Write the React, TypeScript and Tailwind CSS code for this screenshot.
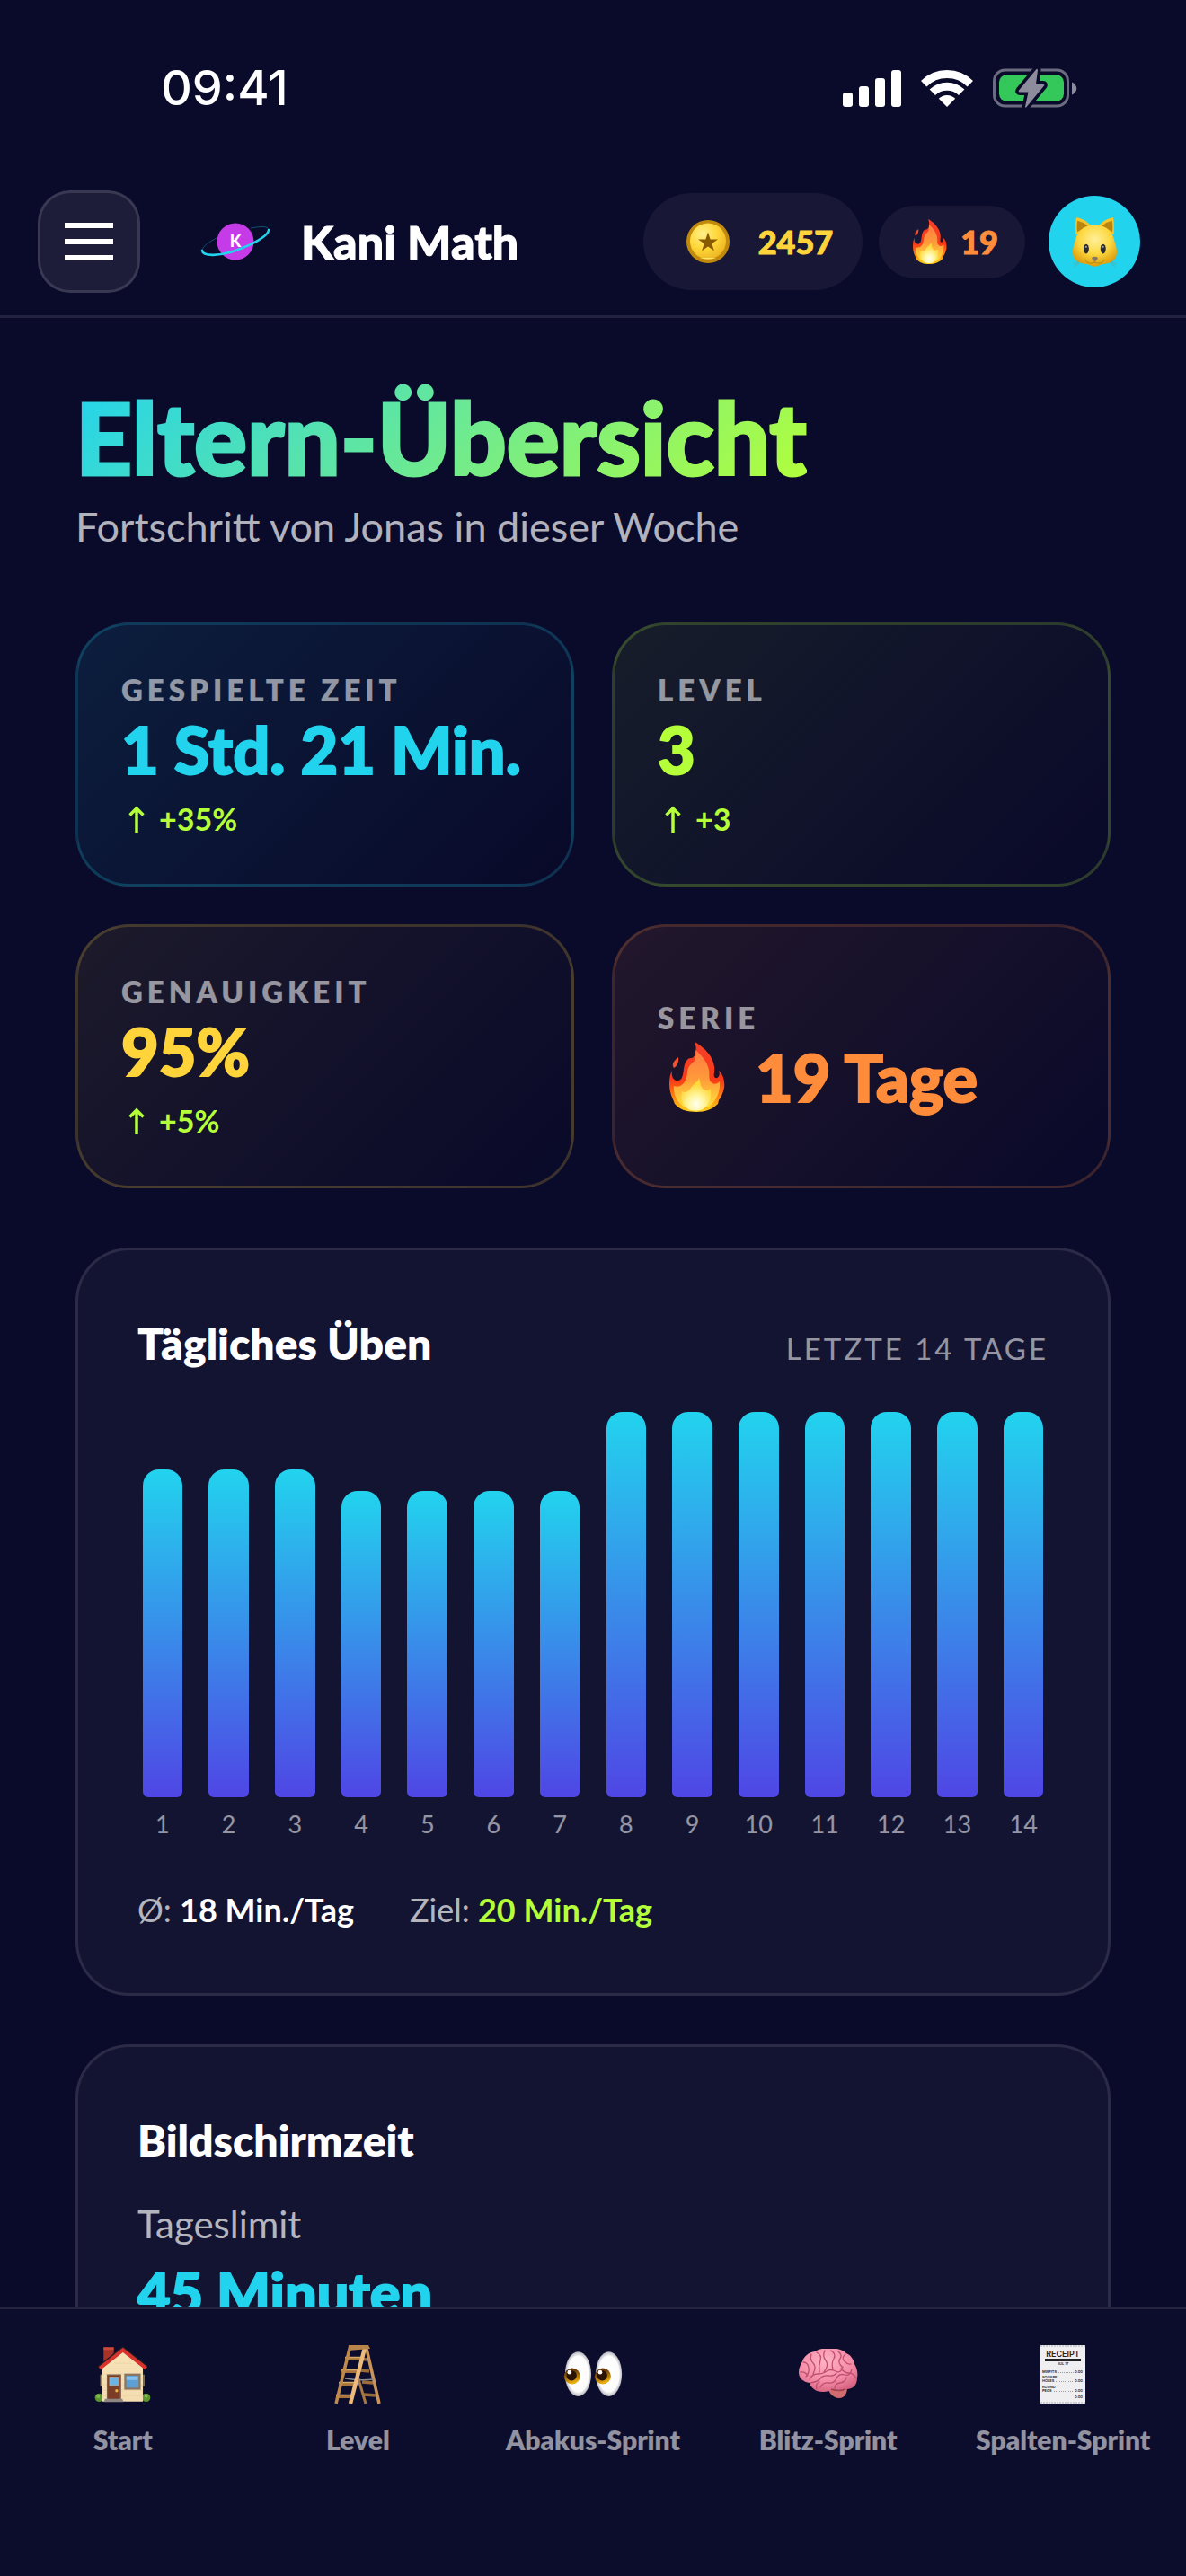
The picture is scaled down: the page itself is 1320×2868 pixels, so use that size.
import { ReactNode } from "react";
import clsx from "clsx";

const stats = [
  {
    label: "Gespielte Zeit",
    value: "1 Std. 21 Min.",
    delta: "+35%",
    card: "border-[#22d3ee]/20 from-[#22d3ee]/10",
    text: "text-[#22d3ee]",
  },
  {
    label: "Level",
    value: "3",
    delta: "+3",
    card: "border-[#b4ff39]/20 from-[#b4ff39]/8",
    text: "text-[#b4ff39]",
  },
  {
    label: "Genauigkeit",
    value: "95%",
    delta: "+5%",
    card: "border-[#ffd43b]/20 from-[#ffd43b]/8",
    text: "text-[#ffd43b]",
  },
  {
    label: "Serie",
    value: "19 Tage",
    flame: true,
    card: "border-[#ff8c3b]/20 from-[#ff8c3b]/10",
    text: "text-[#ff8c3b]",
  },
];

// percent of the chart height, one entry per day
const days = [85, 85, 85, 79.5, 79.5, 79.5, 79.5, 100, 100, 100, 100, 100, 100, 100];

const navItems = [
  { label: "Start", href: "#start", icon: <HouseIcon /> },
  { label: "Level", href: "#level", icon: <LadderIcon /> },
  { label: "Abakus-Sprint", href: "#abakus", icon: <EyesIcon /> },
  { label: "Blitz-Sprint", href: "#blitz", icon: <BrainIcon /> },
  { label: "Spalten-Sprint", href: "#spalten", icon: <ReceiptIcon /> },
];

export default function App() {
  return (
    <div className="flex h-screen w-full flex-col overflow-hidden bg-[#0a0a2a] font-[Lato,sans-serif] text-white">
      <StatusBar />
      <Header />
      <main className="min-h-0 flex-1 overflow-y-auto px-[84px] pt-[72px] [scrollbar-width:none]">
        <h1 className="w-fit bg-linear-135/srgb from-[#22d3ee] to-[#b4ff39] bg-clip-text text-[110px] leading-[120px] font-black text-transparent [-webkit-text-stroke:3px_transparent]">
          Eltern-Übersicht
        </h1>
        <p className="mt-[6px] text-[45px] leading-[68px] text-white/70">Fortschritt von Jonas in dieser Woche</p>

        <section className="mt-[73px] grid grid-cols-2 gap-[42px]">
          {stats.map((s) => (
            <div
              key={s.label}
              className={clsx(
                "flex min-h-[294px] flex-col justify-center rounded-[60px] border-3 bg-linear-135/srgb to-transparent px-[48px] py-[42px]",
                s.card
              )}
            >
              <span className="text-[33px] leading-[46px] font-extrabold tracking-[5px] text-white/55 uppercase">
                {s.label}
              </span>
              <div
                className={clsx(
                  "flex items-center text-[72px] leading-[86px] font-black whitespace-nowrap [-webkit-text-stroke:2px_currentColor]",
                  s.text
                )}
              >
                {s.flame && <FlameIcon className="mr-[34px] ml-[13px] h-[78px] w-[62px]" />}
                {s.value}
              </div>
              {s.delta && (
                <div className="mt-[11px] flex items-center gap-[10px] text-[34px] leading-[48px] font-bold text-[#b4ff39]">
                  <ArrowUpIcon />
                  {s.delta}
                </div>
              )}
            </div>
          ))}
        </section>

        <Card className="mt-[66px]">
          <div className="flex items-baseline justify-between">
            <h2 className="text-[48px] leading-[76px] font-extrabold">Tägliches Üben</h2>
            <span className="text-[33px] tracking-[3px] text-white/55 uppercase">Letzte 14 Tage</span>
          </div>
          <ol className="mt-[38px] flex gap-[18px]">
            {days.map((pct, i) => (
              <li key={i} className="flex flex-1 flex-col items-center">
                <div className="flex h-[429px] w-4/5 items-end">
                  <div
                    className="w-full rounded-t-[18px] rounded-b-[6px] bg-linear-to-b/srgb from-[#22d3ee] to-[#4f46e5]"
                    style={{ height: `${pct}%` }}
                  />
                </div>
                <span className="mt-[12px] text-[27px] leading-[36px] text-white/55">{i + 1}</span>
              </li>
            ))}
          </ol>
          <div className="mt-[50px] flex gap-[62px] text-[36px] leading-[54px] text-white/70">
            <span>
              Ø: <b className="text-white">18 Min./Tag</b>
            </span>
            <span>
              Ziel: <b className="text-[#b4ff39]">20 Min./Tag</b>
            </span>
          </div>
        </Card>

        <Card className="mt-[54px]">
          <h2 className="text-[48px] leading-[76px] font-extrabold">Bildschirmzeit</h2>
          <p className="mt-[25px] text-[42px] leading-[60px] text-white/70">Tageslimit</p>
          <p className="mt-[6px] text-[63px] leading-[80px] font-black text-[#22d3ee] [-webkit-text-stroke:2px_currentColor]">
            45 Minuten
          </p>
        </Card>
      </main>
      <BottomNav />
    </div>
  );
}

function Card({ className, children }: { className?: string; children: ReactNode }) {
  return (
    <section className={clsx("rounded-[60px] border-3 border-white/10 bg-white/4 p-[66px]", className)}>
      {children}
    </section>
  );
}

function StatusBar() {
  return (
    <div className="flex h-[187px] shrink-0 items-center justify-between pt-2 pr-[121px] pl-[179px]">
      <span className="font-[Inter,sans-serif] text-[54px] font-medium">09:41</span>
      <div className="flex items-center gap-[22px]">
        <svg viewBox="0 0 65 42" className="h-[42px] w-[65px]" fill="#fff">
          <rect x="0" y="26" width="11" height="16" rx="3" />
          <rect x="18" y="19" width="11" height="23" rx="3" />
          <rect x="36" y="10" width="11" height="32" rx="3" />
          <rect x="54" y="1" width="11" height="41" rx="3" />
        </svg>
        <svg viewBox="0 0 58 42" className="h-[42px] w-[58px]" fill="none" stroke="#fff">
          <path d="M3.2 16.2a36.5 36.5 0 0 1 51.6 0" strokeWidth="9" />
          <path d="M12.8 25.8a23 23 0 0 1 32.4 0" strokeWidth="9" />
          <path d="M29 42l-9.2-9.2a13 13 0 0 1 18.4 0z" fill="#fff" stroke="none" />
        </svg>
        <svg viewBox="0 0 94 44" className="h-[44px] w-[94px]">
          <rect x="1.5" y="2" width="82" height="40" rx="12" fill="none" stroke="#6c6c80" strokeWidth="3" />
          <rect x="7" y="7.500" width="72" height="29" rx="8" fill="#34c759" />
          <path d="M88 15.500c7 3 7 11 0 14z" fill="#8c8c9c" />
          <path
            d="M48.500 1L29 24.500q-1 2 1 2h9.500L36 43q.5 1.500 1.500 0L57 19.500q1-2-1-2h-8L50 2q-.5-2-1.500-1z"
            fill="#8c8c9c"
            stroke="#0a0a2a"
            strokeWidth="7"
            paintOrder="stroke"
          />
        </svg>
      </div>
    </div>
  );
}

function Header() {
  return (
    <header className="flex shrink-0 items-center border-b-3 border-white/10 py-[25px] pr-[51px] pl-[42px]">
      <button
        aria-label="Menü"
        className="flex size-[114px] flex-col items-center justify-center gap-[12px] rounded-[36px] border-3 border-white/12 bg-white/8"
      >
        <span className="h-[6px] w-[54px] bg-white" />
        <span className="h-[6px] w-[54px] bg-white" />
        <span className="h-[6px] w-[54px] bg-white" />
      </button>
      <svg viewBox="0 0 78 54" className="ml-[67px] h-[54px] w-[78px]">
        <path d="M2 36Q4 30 18 23M56 12q20-4 20 2" fill="none" stroke="#14506e" strokeWidth="1" />
        <circle cx="39" cy="27" r="20.500" fill="#c53be8" />
        <text x="39" y="33" textAnchor="middle" fontSize="18" fontWeight="900" fill="#fff">
          K
        </text>
        <path
          d="M2 37c1 7 20 6 37 0s37-16 37-23"
          fill="none"
          stroke="#22d3ee"
          strokeWidth="2.600"
          strokeLinecap="round"
        />
      </svg>
      <span className="ml-[34px] text-[52px] leading-[66px] font-black [-webkit-text-stroke:1px_currentColor]">
        Kani Math
      </span>

      <div className="ml-auto flex items-center gap-[18px]">
        <div className="flex h-[108px] items-center gap-[32px] rounded-full bg-white/6 pr-[33px] pl-[48px] text-[36px] font-black text-[#ffd43b] [-webkit-text-stroke:1px_currentColor]">
          <CoinIcon />
          2457
        </div>
        <div className="flex h-[81px] items-center gap-[15px] rounded-full bg-white/6 pr-[30px] pl-[38px] text-[36px] font-black text-[#ff8c3b] [-webkit-text-stroke:1px_currentColor]">
          <FlameIcon className="h-[50px] w-[38px]" />
          19
        </div>
        <button
          aria-label="Profil"
          className="ml-2 flex size-[102px] items-center justify-center rounded-full bg-[#22d3ee]"
        >
          <CatIcon />
        </button>
      </div>
    </header>
  );
}

function BottomNav() {
  return (
    <nav className="grid h-[300px] shrink-0 grid-cols-5 items-start border-t-3 border-white/10 bg-white/1 px-[6px] pt-[36px]">
      {navItems.map((item) => (
        <a key={item.label} href={item.href} className="flex flex-col items-center gap-[17px]">
          <span className="flex h-[72px] items-center">{item.icon}</span>
          <span className="text-[30px] leading-[40px] font-extrabold whitespace-nowrap text-white/55">
            {item.label}
          </span>
        </a>
      ))}
    </nav>
  );
}

function ArrowUpIcon() {
  return (
    <svg viewBox="0 0 32 30" className="h-[30px] w-[32px]" fill="none" stroke="currentColor" strokeWidth="3.500">
      <path d="M17 30V3M9.500 10.500L17 3l7.500 7.500" />
    </svg>
  );
}

function FlameIcon({ className }: { className?: string }) {
  return (
    <svg viewBox="0 0 62 78" className={className} preserveAspectRatio="none">
      <defs>
        <linearGradient id="flame-outer" x1="0" y1="0" x2="0" y2="1">
          <stop offset="0" stopColor="#f4402a" />
          <stop offset=".55" stopColor="#f93a17" />
          <stop offset=".8" stopColor="#ff8a10" />
          <stop offset="1" stopColor="#ffd21f" />
        </linearGradient>
        <linearGradient id="flame-mid" x1="0" y1="0" x2="0" y2="1">
          <stop offset="0" stopColor="#ff7a45" />
          <stop offset=".5" stopColor="#ff9a3a" />
          <stop offset="1" stopColor="#ffe23d" />
        </linearGradient>
        <radialGradient id="flame-core" cx=".5" cy=".8" r=".6">
          <stop offset="0" stopColor="#fffff0" />
          <stop offset=".45" stopColor="#fff6a0" />
          <stop offset="1" stopColor="#ffd83a" />
        </radialGradient>
      </defs>
      <path
        d="M28 0c8 4 21 15 22 28 1 6-2 10 1 12 4 1 6-4 4-8 5 4 7 12 6 19-1 6-4 11-6 14l-1 4c-6 6-14 9-24 9S12 76 6 69l-2-5C1 58 0 52 0 46c0-6 1-10 3-14-1 6 1 10 5 11 6 1 7-5 8-13 1-7 4-13 9-12 5-2 6-11 3-18z"
        fill="url(#flame-outer)"
      />
      <path d="M10 17c1 6-2 10-5 12-3-4 0-8 5-12z" fill="#f4512f" />
      <path
        d="M29 9c7 6 13 13 15 22 1 7-1 12 4 15 3 2 6 0 8-2 1 10-3 22-13 29H17C8 67 4 57 5 49c8 3 14-4 15-15 1-9 5-9 8-13 1-3 2-7 1-12z"
        fill="url(#flame-mid)"
      />
      <path
        d="M33 40c2 6 1 10 5 13 3 2 6 1 8-1 1 9-1 19-9 23-4 2-12 2-16 0-7-5-9-12-7-20 3 2 7 1 10-4 3-5 8-6 9-11z"
        fill="url(#flame-core)"
      />
    </svg>
  );
}

function CoinIcon() {
  return (
    <svg viewBox="0 0 48 48" className="size-[48px]">
      <defs>
        <radialGradient id="coin" cx=".35" cy=".3" r=".8">
          <stop offset="0" stopColor="#fff08a" />
          <stop offset=".5" stopColor="#ffd83a" />
          <stop offset="1" stopColor="#eab020" />
        </radialGradient>
      </defs>
      <circle cx="24" cy="24" r="24" fill="#c28a0a" />
      <circle cx="24" cy="23.500" r="20" fill="url(#coin)" />
      <path d="M15 42h18q-9 3-18 0z" fill="#ffe56a" />
      <path d="M24 13.500l2.600 7.900H35l-6.700 4.900 2.600 8-6.900-4.900-6.900 4.900 2.600-8-6.700-4.900h8.400z" fill="#8a5a00" />
    </svg>
  );
}

function CatIcon() {
  return (
    <svg viewBox="120 118 160 184" className="h-[61px] w-[53px]">
      <defs>
        <radialGradient id="cat" cx=".5" cy=".35" r=".65">
          <stop offset="0" stopColor="#fff09a" />
          <stop offset=".55" stopColor="#fcd840" />
          <stop offset="1" stopColor="#dc9c0c" />
        </radialGradient>
      </defs>
      <path d="M136 186c-1-22-1-44 2-58 16 2 36 12 48 26zM264 186c1-22 1-44-2-58-16 2-36 12-48 26z" fill="#f6c52c" />
      <path d="M141 176c-2-16-1-28 1-38 12 3 24 8 34 18zM259 176c2-16 1-28-1-38-12 3-24 8-34 18z" fill="#b98410" />
      <path
        d="M200 153c34 0 58 18 64 46 3 14 10 26 10 46 0 24-18 36-40 38-14 1-22 9-34 9s-20-8-34-9c-22-2-40-14-40-38 0-20 7-32 10-46 6-28 30-46 64-46z"
        fill="url(#cat)"
      />
      <ellipse cx="171" cy="233" rx="9" ry="16" fill="#2c2c30" />
      <ellipse cx="228" cy="233" rx="9" ry="16" fill="#2c2c30" />
      <circle cx="171" cy="226" r="3.500" fill="#9a9aa0" />
      <circle cx="228" cy="226" r="3.500" fill="#9a9aa0" />
      <path d="M190 262q10-6 20 0 0 8-10 13-10-5-10-13z" fill="#8a7560" />
      <path
        d="M200 275v5M168 268q4 14 20 13 8 0 12-4 4 4 12 4 16 1 20-13"
        fill="none"
        stroke="#b8860f"
        strokeWidth="3"
      />
      <path
        d="M146 276l-18 8M148 280l-16 12M254 276l18 8M252 280l16 12"
        stroke="#8a8a60"
        strokeWidth="1.500"
      />
    </svg>
  );
}

function HouseIcon() {
  return (
    <svg viewBox="44 64 190 190" className="size-[63px]">
      <defs>
        <linearGradient id="house-wall" x1="0" y1="0" x2="0" y2="1">
          <stop offset="0" stopColor="#f7e3b8" />
          <stop offset="1" stopColor="#f3dcb0" />
        </linearGradient>
      </defs>
      <circle cx="60" cy="237" r="14" fill="#5c9430" />
      <circle cx="218" cy="237" r="14" fill="#5c9430" />
      <circle cx="57" cy="233" r="6" fill="#82b850" />
      <circle cx="218" cy="232" r="6" fill="#82b850" />
      <rect x="75" y="68" width="34" height="50" fill="#a83228" />
      <rect x="75" y="68" width="34" height="9" fill="#c8483a" />
      <path d="M140 80l67 56v114H70V136z" fill="url(#house-wall)" />
      <path d="M70 158h137M70 176h137M70 194h137M70 212h137M70 230h137M90 140h100M112 122h58" stroke="#e4cb9c" strokeWidth="1.500" />
      <path d="M66 160v40M210 160v40" stroke="#a99270" strokeWidth="4" />
      <path d="M56 130l84-66 84 66-5 6-79-62-79 62z" fill="#1e1c24" />
      <path d="M58 134l82-65 82 65-8 9-74-58-74 58z" fill="#d8322c" />
      <rect x="86" y="159" width="48" height="83" fill="#7d6048" />
      <rect x="90" y="163" width="39" height="79" fill="#7c3d28" />
      <rect x="95" y="168" width="29" height="28" fill="#6ab4e4" stroke="#c4b09c" strokeWidth="2" />
      <circle cx="119" cy="214" r="5" fill="#e8b83c" />
      <rect x="148" y="160" width="48" height="47" fill="#5e9fd4" stroke="#8a7662" strokeWidth="7" />
      <path d="M152 166h38v12h-38z" fill="#86c2ec" />
      <path d="M80 241h58l4 11H76z" fill="#8e8680" />
    </svg>
  );
}

function LadderIcon() {
  return (
    <svg viewBox="0 0 52 67" className="h-[67px] w-[52px]" fill="none">
      <path d="M36 17l-7-1M39 30l-10-1M43 43l-12-1M47 57l-14-1" stroke="#9c6c38" strokeWidth="3.500" />
      <path d="M25 32l10 34" stroke="#a87840" strokeWidth="3" />
      <path d="M36 5l14 61" stroke="#c8945a" strokeWidth="3.500" />
      <path d="M12 16h18M8 30h18M5 44h18M2 58h18" stroke="#a8743c" strokeWidth="4" />
      <path d="M12 14.500h18M8 28.500h18M5 42.500h18M2 56.500h18" stroke="#d8a868" strokeWidth="1.500" />
      <path d="M12 38q16 3 32 1" stroke="#8c8c90" strokeWidth="1.500" />
      <path d="M17 5L2 66" stroke="#c08a4c" strokeWidth="3.500" />
      <path d="M34 4L18 66" stroke="#ecba7c" strokeWidth="4.500" />
      <path d="M16 1h22l2 4-25 2z" fill="#b8844a" />
    </svg>
  );
}

function EyesIcon() {
  return (
    <svg viewBox="46 76 204 160" className="h-[53px] w-[68px]">
      <defs>
        <radialGradient id="eye-white">
          <stop offset="0" stopColor="#fff" />
          <stop offset=".8" stopColor="#fcfcfc" />
          <stop offset="1" stopColor="#b4b4bc" />
        </radialGradient>
        <linearGradient id="iris" x1="0" y1="0" x2=".3" y2="1">
          <stop offset=".3" stopColor="#6a3a06" />
          <stop offset="1" stopColor="#eab010" />
        </linearGradient>
      </defs>
      {[0, 103].map((x) => (
        <g key={x} transform={`translate(${x} 0)`}>
          <ellipse cx="98" cy="155" rx="44" ry="75" fill="url(#eye-white)" />
          <circle cx="78" cy="162" r="27" fill="url(#iris)" />
          <circle cx="76" cy="160" r="17" fill="#2a1204" />
          <circle cx="69" cy="149" r="7" fill="#fff" />
        </g>
      ))}
    </svg>
  );
}

function BrainIcon() {
  return (
    <svg viewBox="0 0 66 56" className="h-[56px] w-[66px]">
      <defs>
        <radialGradient id="brain" cx=".45" cy=".3" r=".75">
          <stop offset="0" stopColor="#ffb4c4" />
          <stop offset=".6" stopColor="#f48ca8" />
          <stop offset="1" stopColor="#d4607c" />
        </radialGradient>
      </defs>
      <path d="M32 44c2 5 6 11 13 11 6 0 9-5 9-12z" fill="#d06c70" />
      <path
        d="M12 38C5 37 0 33 0 26c0-5 2-8 4-12C6 8 11 4 18 3c4-3 11-4 18-3 6-1 13 1 17 5 5 2 8 7 9 12 3 5 4 10 3 15 0 8-4 13-12 13-5 2-9 1-14-1-4 4-12 5-19 3-4-2-7-5-8-9z"
        fill="url(#brain)"
      />
      <path
        d="M5 15q5 0 6 6t-3 10M14 6q-2 6 2 10t0 12M20 4q6 3 4 9t-1 13M29 2q-3 6 1 11t-2 13M36 2q6 4 3 9t-1 12M44 3q5 4 2 8t2 9M52 6q-5 4-1 8t7 3M12 34q3-6 9-6t10-3 10 0 8-5M13 38q8-1 11-5t9-3 9-3M24 43q3-6 9-5t9-5 9-4 8-6M40 44q0-5 6-6t7-6M47 22q4 5 9 5t8 6M2 26q5-1 8 4M20 45q-2-6 3-8"
        fill="none"
        stroke="#c04e70"
        strokeWidth="1.300"
        strokeLinecap="round"
      />
      <path d="M36 45q8 3 16 0" fill="none" stroke="#9c4454" strokeWidth="1.500" />
    </svg>
  );
}

function ReceiptIcon() {
  return (
    <svg viewBox="0 0 50 65" className="h-[65px] w-[50px]">
      <rect width="50" height="65" rx="1" fill="#efeff1" />
      <path d="M0 1h50M0 64h50" stroke="#c4c4c8" strokeWidth="1.500" strokeDasharray="2 1" />
      <g fill="#222226" fontFamily="Inter, sans-serif" fontWeight="600">
        <text x="25" y="13" fontSize="9" textAnchor="middle">
          RECEIPT
        </text>
        <text x="25" y="22" fontSize="4" textAnchor="middle">
          JUL 17
        </text>
        <g fontSize="4">
          <text x="2" y="31">MISFITS</text>
          <text x="2" y="37">SQUARE</text>
          <text x="2" y="41">HOLES</text>
          <text x="2" y="48">ROUND</text>
          <text x="2" y="52">PEGS</text>
        </g>
        <g fontSize="4" textAnchor="end">
          <text x="47" y="31">0.00</text>
          <text x="47" y="41">0.00</text>
          <text x="47" y="52">0.00</text>
          <text x="47" y="59">0.00</text>
        </g>
      </g>
      <path d="M5 15.500h40M5 17.500h40" stroke="#222226" strokeWidth="1" />
      <path d="M20 30.500h17M17 40.500h20M15 51.500h22" stroke="#88888c" strokeWidth=".8" strokeDasharray="1 1" />
    </svg>
  );
}
